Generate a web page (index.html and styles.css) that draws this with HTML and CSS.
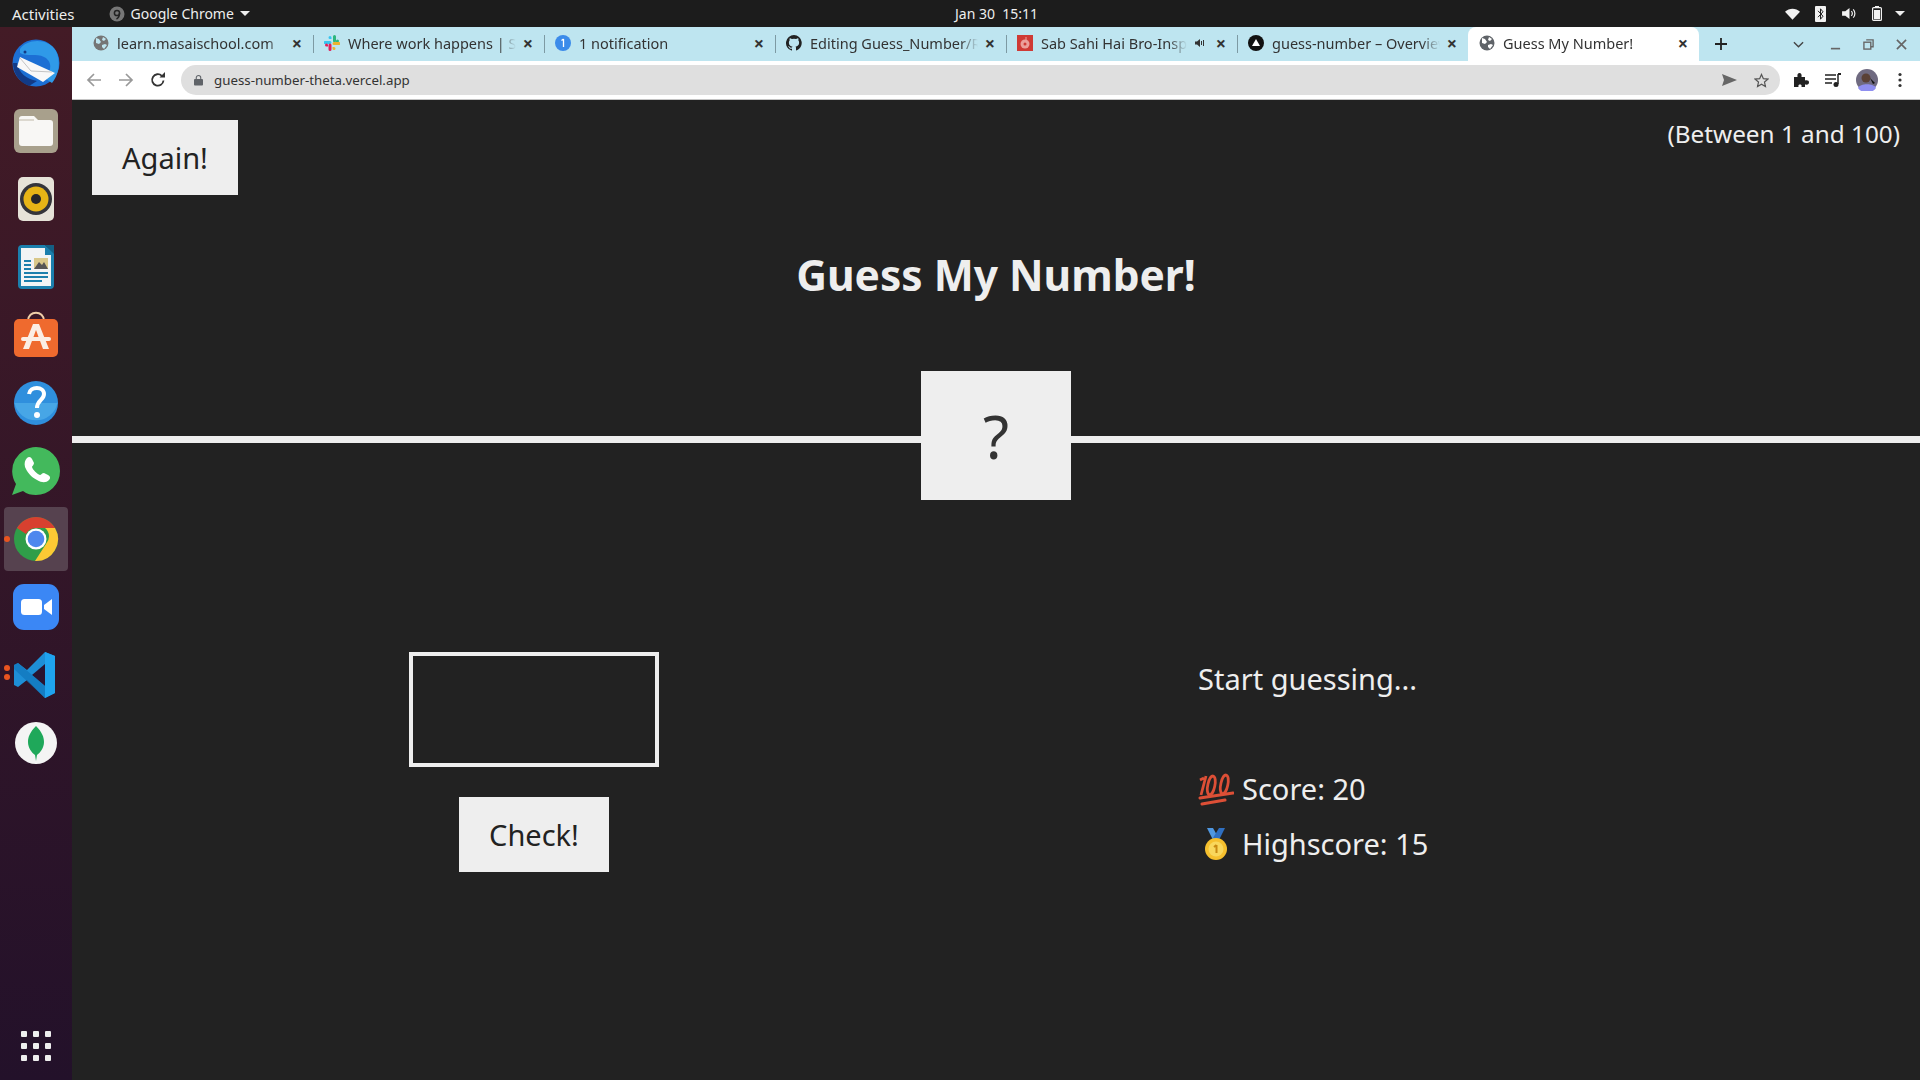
FILE: index.html
```html
<!DOCTYPE html>
<html>
  <head>
    <title>Guess My Number!</title>
    <link rel="stylesheet" href="styles.css">
  </head>
  <body>
    <div class="topbar">
      <span class="activities">Activities</span>
      <span class="app-menu">
        <svg class="app-icon" viewBox="0 0 16 16"><circle cx="8" cy="8" r="7.5" fill="#777"/><circle cx="8" cy="7" r="2.6" fill="none" stroke="#222" stroke-width="1.5"/><path d="M10.5 7c0 3-1 5-3 6" fill="none" stroke="#222" stroke-width="1.5"/></svg>
        Google Chrome
        <i class="caret"></i>
      </span>
      <span class="clock">Jan 30&nbsp;&nbsp;15:11</span>
      <span class="status">
        <svg class="st-wifi" viewBox="0 0 16 12"><path d="M0 3.5C4.500-.8 11.500-.8 16 3.500L8 12z" fill="#f2f2f2"/></svg>
        <svg class="st-bt" viewBox="0 0 11 16"><rect width="11" height="16" rx="1" fill="#f2f2f2"/><path d="M3 4.800l5 5.400-2.500 3V2.800L8 5.800l-5 5.400" fill="none" stroke="#222"/></svg>
        <svg class="st-vol" viewBox="0 0 16 14"><path d="M0 4.500h3.500L8 1v12L3.500 9.500H0z" fill="#f2f2f2"/><path d="M10 4.500a3.500 3.500 0 0 1 0 5M12 2.500a6.500 6.500 0 0 1 0 9" fill="none" stroke="#f2f2f2" stroke-width="1.300"/></svg>
        <svg class="st-bat" viewBox="0 0 10 15"><rect x="3" width="4" height="2" fill="#f2f2f2"/><rect x=".6" y="1.600" width="8.800" height="12.800" rx="1" fill="none" stroke="#f2f2f2" stroke-width="1.200"/><rect x="2" y="4" width="6" height="9.200" fill="#f2f2f2"/></svg>
        <i class="caret caret-status"></i>
      </span>
    </div>

    <div class="desktop">
      <nav class="dock">
        <div class="dock-item">
          <svg viewBox="0 0 48 48"><circle cx="24" cy="24" r="23.500" fill="#1c6fd4"/><path d="M8 10C14 0 36-2 44 12c5 10 3 24-4 32l-6-4c6-10 6-18-2-22-8-4-16 0-24-4z" fill="#2f9ae8"/><path d="M1 24c0 10 6 19 16 23l8-5C14 40 7 34 5 24z" fill="#123a86"/><path d="M8 18l35 16-12 9L5 28z" fill="#f8f8f8"/><path d="M8 19l11 13 21 1" fill="none" stroke="#c4c4c4"/><circle cx="13" cy="13" r="1.500" fill="#123a86"/></svg>
        </div>
        <div class="dock-item">
          <svg viewBox="0 0 48 48"><rect x="2" y="2" width="44" height="44" rx="6" fill="#a8a08c"/><path d="M7 12a3 3 0 0 1 3-3h12l4 4h12a3 3 0 0 1 3 3v20a3 3 0 0 1-3 3H10a3 3 0 0 1-3-3z" fill="#f8f7f5"/><path d="M7 13h15" stroke="#dcd8cf" stroke-width="2"/></svg>
        </div>
        <div class="dock-item">
          <svg viewBox="0 0 48 48"><rect x="6" y="2" width="36" height="44" rx="5" fill="#e6e2d8"/><circle cx="24" cy="24" r="16" fill="#34343a"/><circle cx="24" cy="24" r="12.500" fill="#e7b416"/><circle cx="24" cy="24" r="5" fill="#26262a"/></svg>
        </div>
        <div class="dock-item">
          <svg viewBox="0 0 48 48"><path d="M10 2h23l9 8v32a4 4 0 0 1-4 4H10a4 4 0 0 1-4-4V6a4 4 0 0 1 4-4z" fill="#1b7fad"/><path d="M9 5h24v7h6v31H9z" fill="#f2f4f5"/><path d="M33 2h9v9z" fill="#145f84"/><path d="M12 17h7v2h-7zM12 21h7v2h-7zM12 25h7v2h-7zM12 29h24v2H12zM12 33h24v2H12zM12 37h18v2H12z" fill="#1b7fad"/><rect x="22" y="15" width="14" height="11" fill="#d9c88a"/><path d="M22 26l5-7 3 3 2-3 4 7z" fill="#555"/></svg>
        </div>
        <div class="dock-item">
          <svg viewBox="0 0 48 48"><path d="M16 10c0-11 16-11 16 0" fill="none" stroke="#f0cfa8" stroke-width="2"/><rect x="2" y="8" width="44" height="38" rx="5" fill="#ef6a2e"/><path d="M21 13h6l10 25h-6l-7-19-7 19h-6z" fill="#fbeee4"/><rect x="9" y="26" width="30" height="4" rx="2" fill="#fbeee4"/></svg>
        </div>
        <div class="dock-item">
          <svg viewBox="0 0 48 48"><circle cx="24" cy="24" r="22" fill="#2f8fdd"/><path d="M2.500 24h43a22 22 0 0 1-43 0z" fill="#47a6e6"/><path d="M17 15c1-8 15-8 15 0 0 6-7 6-7 14" fill="none" stroke="#fff" stroke-width="4"/><circle cx="25" cy="36" r="3" fill="#fff"/></svg>
        </div>
        <div class="dock-item">
          <svg viewBox="0 0 48 48"><path d="M24 0a24 24 0 0 1 0 48c-5 0-9-1-13-4L0 48l4-11A24 24 0 0 1 24 0z" fill="#43b95c"/><path d="M15 11c2-2 4-1 5 1l2 4c0 2-2 3-2 4 1 3 5 7 8 8 1 0 2-2 4-2l4 2c2 1 3 3 1 5-3 3-7 3-12 0-6-3-10-8-12-13-1-4 0-7 2-9z" fill="#fff"/></svg>
        </div>
        <div class="dock-item dock-active">
          <i class="run-dot"></i>
          <svg viewBox="0 0 48 48"><circle cx="24" cy="24" r="22" fill="#2f9e49"/><path d="M5 13A22 22 0 0 1 43 13H24a11 11 0 0 0-10 6z" fill="#d8402f"/><path d="M43 13a22 22 0 0 1-20 33l11-17a11 11 0 0 0-1-16z" fill="#fcc934"/><circle cx="24" cy="24" r="10.500" fill="#fff"/><circle cx="24" cy="24" r="8.300" fill="#4e87ee"/></svg>
        </div>
        <div class="dock-item">
          <svg viewBox="0 0 48 48"><rect x="1" y="1" width="46" height="46" rx="11" fill="#3b87f5"/><rect x="9" y="16" width="21" height="16" rx="3.500" fill="#fff"/><path d="M32 22l8-6v16l-8-6z" fill="#fff"/></svg>
        </div>
        <div class="dock-item">
          <i class="run-dot run-two"></i>
          <svg viewBox="0 0 48 48"><path d="M33 1l10 4v37l-10 5-18-18-9 7-4-2V14l4-2 9 7z" fill="#1e8fd6"/><path d="M33 1l10 4v37l-10 5z" fill="#1fa3ee"/><path d="M33 13L20 24l13 11z" fill="#2a1430"/><path d="M2 14l4-2 27 23v12L2 18z" fill="#0f75bb" opacity=".7"/></svg>
        </div>
        <div class="dock-item">
          <svg viewBox="0 0 48 48"><circle cx="24" cy="24" r="21" fill="#f4f4f4"/><path d="M24 7c6 6 8 11 8 16 0 6-4 11-7 13l-1 6-1-6c-3-2-7-7-7-13 0-5 2-10 8-16z" fill="#1fa85a"/></svg>
        </div>
        <div class="dock-apps">
          <i></i><i></i><i></i><i></i><i></i><i></i><i></i><i></i><i></i>
        </div>
      </nav>

      <div class="window">
        <div class="tabstrip">
          <div class="tab">
            <svg class="favicon" viewBox="0 0 16 16"><circle cx="8" cy="8" r="7.500" fill="#757575"/><path d="M3 3l3 1 2 3-2 2-3-1zM10 2l3 2-2 2-2-1zM9 10l3-1 2 1-3 4-2-2z" fill="#bee5f0"/></svg>
            <span class="tab-title">learn.masaischool.com</span>
            <i class="tab-close">×</i>
          </div>
          <div class="tab">
            <svg class="favicon" viewBox="0 0 16 16"><path d="M6 1a1.500 1.500 0 0 1 1.500 1.500V4H6a1.500 1.500 0 0 1 0-3zM1 6h5a1.500 1.500 0 0 1 0 3H1a1.500 1.500 0 0 1 0-3z" fill="#36c5f0"/><path d="M15 6a1.500 1.500 0 0 1-1.500 1.500H12V6a1.500 1.500 0 0 1 3 0zM9 1.500a1.500 1.500 0 0 1 3 0V6a1.500 1.500 0 0 1-3 0z" fill="#2eb67d"/><path d="M10 15a1.500 1.500 0 0 1-1.500-1.500V12H10a1.500 1.500 0 0 1 0 3zM10 7h5a1.500 1.500 0 0 1 0 3h-5a1.500 1.500 0 0 1 0-3z" fill="#ecb22e"/><path d="M1 10a1.500 1.500 0 0 1 3 0v1.500H2.500A1.500 1.500 0 0 1 1 10zM4.500 10a1.500 1.500 0 0 1 3 0v4.500a1.500 1.500 0 0 1-3 0z" fill="#e01e5a"/></svg>
            <span class="tab-title">Where work happens | Sl</span>
            <i class="tab-close">×</i>
          </div>
          <div class="tab">
            <svg class="favicon" viewBox="0 0 16 16"><circle cx="8" cy="8" r="8" fill="#3b8bea"/><path d="M8.500 4v8M6.500 5.500L8.500 4" stroke="#fff" stroke-width="1.300" fill="none"/></svg>
            <span class="tab-title">1 notification</span>
            <i class="tab-close">×</i>
          </div>
          <div class="tab">
            <svg class="favicon" viewBox="0 0 16 16"><path d="M8 0a8 8 0 0 0-2.500 15.600c.4 0 .5-.2.500-.4v-1.500c-2.200.5-2.700-1-2.700-1-.4-.9-.9-1.200-.9-1.200-.7-.5 0-.5 0-.5.800.1 1.200.8 1.200.8.700 1.200 1.900.9 2.400.7 0-.5.300-.9.500-1.100-1.800-.2-3.600-.9-3.600-4 0-.9.300-1.600.8-2.100 0-.2-.4-1 .1-2.100 0 0 .7-.2 2.200.8a7.500 7.500 0 0 1 4 0c1.500-1 2.200-.8 2.200-.8.500 1.100.2 1.900.1 2.100.5.500.8 1.200.8 2.100 0 3.100-1.900 3.800-3.600 4 .3.200.5.700.5 1.500v2.200c0 .2.100.4.500.4A8 8 0 0 0 8 0z" fill="#222"/></svg>
            <span class="tab-title">Editing Guess_Number/R</span>
            <i class="tab-close">×</i>
          </div>
          <div class="tab">
            <svg class="favicon" viewBox="0 0 16 16"><rect width="16" height="16" fill="#cf3a35"/><circle cx="8" cy="9" r="4.500" fill="#eba09b"/><circle cx="8" cy="9" r="1.500" fill="#cf3a35"/><path d="M9 2v4" stroke="#eba09b"/></svg>
            <span class="tab-title">Sab Sahi Hai Bro-Insp</span>
            <svg class="tab-sound" viewBox="0 0 10 10"><path d="M0 3.500h2L5 1v8L2 6.500H0z" fill="#333"/><path d="M6.500 3v4M8.500 2v6" stroke="#333"/></svg>
            <i class="tab-close">×</i>
          </div>
          <div class="tab">
            <svg class="favicon" viewBox="0 0 16 16"><circle cx="8" cy="8" r="8" fill="#111"/><path d="M8 4l4 7H4z" fill="#fff"/></svg>
            <span class="tab-title">guess-number – Overview</span>
            <i class="tab-close">×</i>
          </div>
          <div class="tab tab-active">
            <svg class="favicon" viewBox="0 0 16 16"><circle cx="8" cy="8" r="7.500" fill="#5f6368"/><path d="M3 3l3 1 2 3-2 2-3-1zM10 2l3 2-2 2-2-1zM9 10l3-1 2 1-3 4-2-2z" fill="#fff"/></svg>
            <span class="tab-title">Guess My Number!</span>
            <i class="tab-close">×</i>
          </div>
          <svg class="new-tab" viewBox="0 0 12 12"><path d="M6 0v12M0 6h12" stroke="#222" stroke-width="1.800"/></svg>
          <div class="win-buttons">
            <svg class="win-chevron" viewBox="0 0 12 8"><path d="M1 1.500l5 5 5-5" fill="none" stroke="#444" stroke-width="1.500"/></svg>
            <svg viewBox="0 0 12 12"><path d="M1 10.500h10" stroke="#666" stroke-width="1.800"/></svg>
            <svg viewBox="0 0 12 12"><path d="M3.500 1h7.500v7.500h-2.500" fill="none" stroke="#666" stroke-width="1.500"/><rect x="1" y="3.500" width="7.500" height="7.500" fill="none" stroke="#666" stroke-width="1.500"/></svg>
            <svg viewBox="0 0 12 12"><path d="M1 1l10 10M11 1L1 11" stroke="#666" stroke-width="1.800"/></svg>
          </div>
        </div>

        <div class="toolbar">
          <svg class="tool tool-nav" viewBox="0 0 16 16"><path d="M15 8H2M8 2L2 8l6 6" fill="none" stroke="#999" stroke-width="1.700"/></svg>
          <svg class="tool tool-nav" viewBox="0 0 16 16"><path d="M1 8h13M8 2l6 6-6 6" fill="none" stroke="#999" stroke-width="1.700"/></svg>
          <svg class="tool tool-nav" viewBox="0 0 16 16"><path d="M13.500 8.500A5.700 5.700 0 1 1 11.800 3.800" fill="none" stroke="#333" stroke-width="1.800"/><path d="M9.500 5.500H15V0z" fill="#333"/></svg>
          <div class="omnibox">
            <svg class="lock" viewBox="0 0 10 12"><path d="M2.500 5V3.500a2.500 2.500 0 0 1 5 0V5" fill="none" stroke="#5f6368" stroke-width="1.200"/><rect y="5" width="10" height="7" rx="1" fill="#5f6368"/></svg>
            <span class="url">guess-number-theta.vercel.app</span>
            <svg class="omni-send" viewBox="0 0 15 12"><path d="M0 0l15 6-15 6 2-6z" fill="#666"/></svg>
            <svg class="omni-star" viewBox="0 0 16 16"><path d="M8 1.500l2 4.500 4.800.5-3.600 3.200 1 4.800L8 12l-4.200 2.500 1-4.800L1.200 6.500 6 6z" fill="none" stroke="#555" stroke-width="1.300"/></svg>
          </div>
          <svg class="tool tool-ext" viewBox="0 0 16 16"><path d="M1 5h3.500C4 2 5 1 6.500 1S9 2.500 8.500 5H12v3.500c3-.5 4 .5 4 2s-1 2.500-4 2V15H8.500c.5-2-.5-2.500-1.500-2.500S5 13 5.500 15H1z" fill="#222"/></svg>
          <svg class="tool tool-media" viewBox="0 0 16 16"><path d="M0 3h11M0 7h11M0 11h7" stroke="#222" stroke-width="1.500"/><path d="M13 2v10" stroke="#222" stroke-width="1.500"/><path d="M13 1h3v2h-3z" fill="#222"/><circle cx="11" cy="12.500" r="2.500" fill="#222"/></svg>
          <svg class="tool avatar" viewBox="0 0 22 22"><circle cx="11" cy="11" r="11" fill="#6f6a80"/><path d="M2 19c2-5 16-5 18 0a11 11 0 0 1-18 0z" fill="#8f8ff0"/><circle cx="10" cy="9" r="4.500" fill="#5a4136"/><path d="M14 9l5 5-2 1z" fill="#111"/></svg>
          <svg class="tool tool-menu" viewBox="0 0 4 16"><circle cx="2" cy="2.500" r="1.600" fill="#333"/><circle cx="2" cy="8" r="1.600" fill="#333"/><circle cx="2" cy="13.500" r="1.600" fill="#333"/></svg>
        </div>

        <div class="page">
          <header class="game-header">
            <div class="header-top">
              <button class="btn">Again!</button>
              <p class="between">(Between 1 and 100)</p>
            </div>
            <h1 class="title">Guess My Number!</h1>
            <div class="number">?</div>
          </header>
          <main class="game-main">
            <section class="left">
              <input class="guess" type="text">
              <button class="btn btn-check">Check!</button>
            </section>
            <section class="right">
              <p class="message">Start guessing...</p>
              <p class="label-score">
                <svg class="emoji" viewBox="0 0 36 36"><path d="M8 5L3 24M6 7L2 9M15 5c-4 0-8 15-4 19 5 1 9-18 4-19zM28 4c-4 0-8 15-4 19 5 1 9-18 4-19z" fill="none" stroke="#dd4f36" stroke-width="2.800"/><path d="M2 27l33-5M4 33l23-4" fill="none" stroke="#dd4f36" stroke-width="3" stroke-linecap="round"/></svg>
                Score: 20
              </p>
              <p class="label-highscore">
                <svg class="emoji" viewBox="0 0 36 36"><path d="M9 2h6l5 9-5 3z" fill="#4f97e0"/><path d="M27 2h-6l-6 10 6 2z" fill="#2f6fc0"/><circle cx="18" cy="23" r="11" fill="#f6c02e"/><circle cx="18" cy="23" r="7.500" fill="#f9d75c"/><path d="M18.500 19v8M16 21l2.500-2" stroke="#c98a12" stroke-width="2" fill="none"/></svg>
                Highscore: 15
              </p>
            </section>
          </main>
        </div>
      </div>
    </div>
  </body>
</html>
```

FILE: styles.css
```css
* {
  box-sizing: border-box;
}
html, body {
  margin: 0;
  height: 100%;
}
body {
  width: 1920px;
  height: 1080px;
  overflow: hidden;
  font-family: 'Noto Sans', sans-serif;
  background-color: #222;
  display: flex;
  flex-direction: column;
}
p, h1 {
  margin: 0;
}

/* ubuntu top bar */
.topbar {
  height: 27px;
  flex-shrink: 0;
  background-color: #1c1c1c;
  color: #eee;
  font-size: 14px;
  display: flex;
  align-items: center;
  padding-left: 12px;
  position: relative;
}
.activities {
  font-size: 15px;
}
.app-menu {
  display: flex;
  align-items: center;
  margin-left: 34px;
  gap: 6px;
}
.app-icon {
  width: 16px;
  height: 16px;
}
.caret {
  width: 0;
  height: 0;
  border-left: 5px solid transparent;
  border-right: 5px solid transparent;
  border-top: 5px solid #eee;
}
.clock {
  position: absolute;
  left: 955px;
}
.status {
  margin-left: auto;
  display: flex;
  align-items: center;
  padding-right: 15px;
}
.st-wifi {
  width: 15px;
  height: 12px;
}
.st-bt {
  width: 11px;
  height: 16px;
  margin-left: 15px;
}
.st-vol {
  width: 15px;
  height: 13px;
  margin-left: 16px;
}
.st-bat {
  width: 10px;
  height: 15px;
  margin-left: 15px;
}
.caret-status {
  margin-left: 13px;
}

.desktop {
  flex: 1;
  display: flex;
  min-height: 0;
}

/* left dock */
.dock {
  width: 72px;
  flex-shrink: 0;
  padding: 2px 4px 0;
  background: linear-gradient(#431b26, #23112a);
  display: flex;
  flex-direction: column;
  align-items: center;
}
.dock-item {
  width: 64px;
  height: 68px;
  display: flex;
  align-items: center;
  justify-content: center;
  position: relative;
}
.dock-item svg {
  width: 48px;
  height: 48px;
}
.dock-active {
  background-color: #56424f;
  border-radius: 4px;
  height: 64px;
  margin: 2px 0;
}
.run-dot {
  position: absolute;
  left: 0;
  top: 29px;
  width: 6px;
  height: 6px;
  border-radius: 50%;
  background-color: #e95420;
}
.run-two {
  top: 24px;
  box-shadow: 0 9px 0 #e95420;
}
.dock-apps {
  margin-top: auto;
  margin-bottom: 19px;
  display: grid;
  grid-template-columns: repeat(3, 6px);
  gap: 6px;
}
.dock-apps i {
  width: 6px;
  height: 6px;
  border-radius: 1px;
  background-color: #eee;
}

/* chrome window */
.window {
  flex: 1;
  min-width: 0;
  display: flex;
  flex-direction: column;
}
.tabstrip {
  height: 34px;
  flex-shrink: 0;
  background-color: #bee5f0;
  display: flex;
  align-items: stretch;
  padding-left: 10px;
  font-size: 14.5px;
  color: #333;
}
.tab {
  width: 231px;
  display: flex;
  align-items: center;
  padding: 0 8px 2px 11px;
  position: relative;
}
.tab + .tab::before {
  content: '';
  position: absolute;
  left: 0;
  top: 8px;
  bottom: 8px;
  width: 1px;
  background-color: #7d9aa3;
}
.tab-active {
  background-color: #fff;
  border-radius: 8px 8px 0 0;
}
.tab-active::before {
  display: none;
}
.favicon {
  width: 16px;
  height: 16px;
  flex-shrink: 0;
}
.tab-title {
  flex: 1;
  min-width: 0;
  margin-left: 8px;
  white-space: nowrap;
  overflow: hidden;
  -webkit-mask-image: linear-gradient(to right, #000 calc(100% - 18px), transparent);
  mask-image: linear-gradient(to right, #000 calc(100% - 18px), transparent);
}
.tab-sound {
  width: 10px;
  height: 10px;
  margin: 0 4px 0 8px;
  flex-shrink: 0;
}
.tab-close {
  width: 16px;
  flex-shrink: 0;
  margin-left: 4px;
  text-align: center;
  font-style: normal;
  font-size: 18px;
  font-weight: bold;
  line-height: 1;
  color: #333;
}
.new-tab {
  width: 12px;
  height: 12px;
  margin: 11px 0 0 16px;
}
.win-buttons {
  margin-left: auto;
  display: flex;
  align-items: center;
  gap: 22px;
  padding-right: 13px;
}
.win-buttons svg {
  width: 11px;
  height: 11px;
}
.win-buttons .win-chevron {
  margin-right: 4px;
}

.toolbar {
  height: 39px;
  flex-shrink: 0;
  background-color: #fff;
  border-bottom: 1px solid #c4c4c4;
  display: flex;
  align-items: center;
  padding-left: 14px;
}
.tool {
  width: 16px;
  height: 16px;
  flex-shrink: 0;
}
.tool-nav {
  margin-right: 16px;
}
.tool-nav:nth-child(3) {
  margin-right: 15px;
}
.omnibox {
  width: 1599px;
  height: 30px;
  flex-shrink: 0;
  background-color: #dfdfdf;
  border-radius: 15px;
  display: flex;
  align-items: center;
  padding: 0 11px 0 13px;
  font-size: 13.3px;
  color: #333;
}
.lock {
  width: 9px;
  height: 12px;
}
.url {
  margin-left: 11px;
}
.omni-send {
  width: 15px;
  height: 12px;
  margin-left: auto;
}
.omni-star {
  width: 15px;
  height: 15px;
  margin-left: 17px;
}
.tool-ext {
  margin-left: 13px;
}
.tool-media {
  margin-left: 16px;
}
.avatar {
  width: 22px;
  height: 22px;
  margin-left: 15px;
}
.tool-menu {
  width: 4px;
  margin-left: 20px;
}

/* the game itself */
.page {
  flex: 1;
  background-color: #222;
  color: #eee;
  font-size: 29px;
}
.game-header {
  height: 343px;
  border-bottom: 7px solid #eee;
  position: relative;
}
.header-top {
  display: flex;
  justify-content: space-between;
  align-items: flex-start;
  padding: 20px 20px 0;
}
.btn {
  width: 146px;
  height: 75px;
  border: none;
  background-color: #eee;
  color: #222;
  font-family: inherit;
  font-size: 29px;
}
.between {
  font-size: 24.3px;
  line-height: 28px;
}
.title {
  text-align: center;
  font-size: 42.5px;
  line-height: 50px;
  margin-top: 55px;
}
.number {
  position: absolute;
  left: 849px;
  top: 271px;
  width: 150px;
  height: 129px;
  background-color: #eee;
  color: #333;
  font-size: 60px;
  display: flex;
  align-items: center;
  justify-content: center;
}
.game-main {
  display: grid;
  grid-template-columns: 1fr 1fr;
}
.left {
  display: flex;
  flex-direction: column;
  align-items: center;
  padding-top: 209px;
}
.guess {
  width: 250px;
  height: 115px;
  border: 4px solid #eee;
  background: none;
  display: block;
}
.btn-check {
  width: 150px;
  margin-top: 30px;
}
.right {
  padding: 216px 0 0 202px;
}
.message {
  line-height: 40px;
  margin-bottom: 62px;
}
.label-score, .label-highscore {
  display: flex;
  align-items: center;
  gap: 8px;
  height: 55px;
}
.emoji {
  width: 36px;
  height: 36px;
  flex-shrink: 0;
}
```
